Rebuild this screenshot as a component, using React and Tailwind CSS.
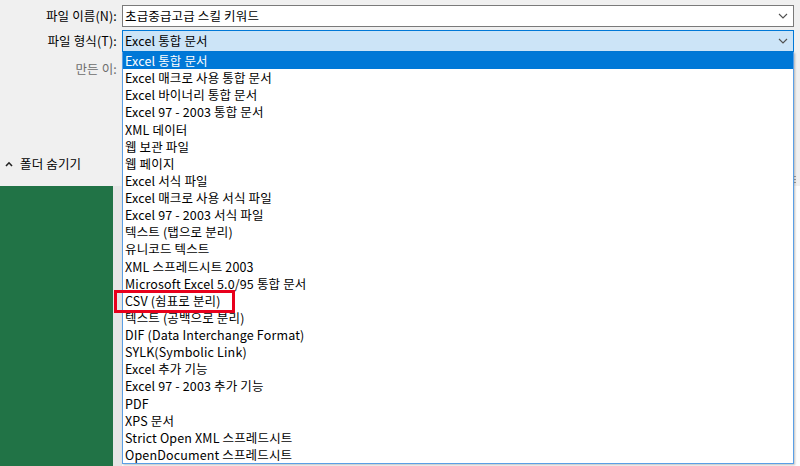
import React from 'react';

const fileTypes = [
  'Excel 통합 문서',
  'Excel 매크로 사용 통합 문서',
  'Excel 바이너리 통합 문서',
  'Excel 97 - 2003 통합 문서',
  'XML 데이터',
  '웹 보관 파일',
  '웹 페이지',
  'Excel 서식 파일',
  'Excel 매크로 사용 서식 파일',
  'Excel 97 - 2003 서식 파일',
  '텍스트 (탭으로 분리)',
  '유니코드 텍스트',
  'XML 스프레드시트 2003',
  'Microsoft Excel 5.0/95 통합 문서',
  'CSV (쉼표로 분리)',
  '텍스트 (공백으로 분리)',
  'DIF (Data Interchange Format)',
  'SYLK(Symbolic Link)',
  'Excel 추가 기능',
  'Excel 97 - 2003 추가 기능',
  'PDF',
  'XPS 문서',
  'Strict Open XML 스프레드시트',
  'OpenDocument 스프레드시트',
];

const Chevron = () => (
  <svg width="10" height="6" viewBox="0 0 10 6" className="shrink-0">
    <path d="M1 1 L5 5 L9 1" fill="none" stroke="#505050" strokeWidth="1.1" />
  </svg>
);

const App = () => {
  return (
    <div
      className="relative w-[800px] h-[466px] overflow-hidden text-[12.5px] tracking-[0.15px] text-black"
      style={{ fontFamily: '"Noto Sans CJK KR", "Noto Sans", sans-serif' }}
    >
      {/* save dialog */}
      <div className="h-[186px] bg-[#f0f0f0] flex flex-col pt-[5px] pr-[6px]">
        <div className="flex items-center h-[22px]">
          <span className="w-[117px] text-right leading-none">파일 이름(N):</span>
          <div className="ml-[5px] flex-1 h-full bg-white border border-[#7a7a7a] flex items-center pl-[2px] pr-[5px]">
            <span className="flex-1 leading-none">초급중급고급 스킬 키워드</span>
            <Chevron />
          </div>
        </div>

        <div className="flex items-center h-[22px] mt-[3px]">
          <span className="w-[117px] text-right leading-none">파일 형식(T):</span>
          <div className="relative ml-[5px] flex-1 h-full bg-[#cce4f7] border border-[#0078d7] flex items-center pl-[2px] pr-[5px]">
            <span className="flex-1 leading-none">Excel 통합 문서</span>
            <Chevron />

            {/* open list */}
            <div className="absolute z-10 left-[-1px] right-[-1px] top-[21px] bg-white border border-t-0 border-[#5a9fe6] shadow-[1px_1px_2px_rgba(0,0,0,0.25)]">
              {fileTypes.map((t, i) => (
                <div
                  key={t}
                  className={
                    i === 0
                      ? 'h-[17.13px] leading-[17px] pl-[2px] bg-[#0078d7] text-white'
                      : 'h-[17.13px] leading-[17px] pl-[2px]'
                  }
                >
                  {t}
                </div>
              ))}
            </div>
          </div>
        </div>

        <div className="flex items-center h-[22px] mt-[6px]">
          <span className="w-[117px] text-right leading-none text-[#6d6d6d]">만든 이:</span>
        </div>

        <div className="flex-1 flex items-end justify-between pb-[16px]">
          <div className="flex items-center gap-[7px] pl-[5px]">
            <svg width="8" height="6" viewBox="0 0 8 6">
              <path d="M1 5 L4 1.8 L7 5" fill="none" stroke="#222" strokeWidth="1.6" />
            </svg>
            <span className="leading-none">폴더 숨기기</span>
          </div>
          <svg width="4" height="8" viewBox="0 0 4 8" className="mr-[-3px] mb-[-14px]">
            <rect x="0" y="0" width="3" height="1" fill="#a0a0a0" />
            <rect x="0" y="3" width="3" height="1" fill="#a0a0a0" />
            <rect x="0" y="6" width="3" height="1" fill="#a0a0a0" />
          </svg>
        </div>
      </div>

      {/* excel window behind */}
      <div className="flex h-[280px]">
        <div className="w-[113px] bg-[#217346]" />
        <div className="w-[9px] bg-[#e6e6e6]" />
        <div className="flex-1 bg-[#fdfdfd]" />
      </div>

      {/* highlight mark */}
      <div className="absolute left-[114px] top-[290px] w-[121px] h-[23px] border-[3px] border-[#e8001c] z-20" />
    </div>
  );
};

export default App;
